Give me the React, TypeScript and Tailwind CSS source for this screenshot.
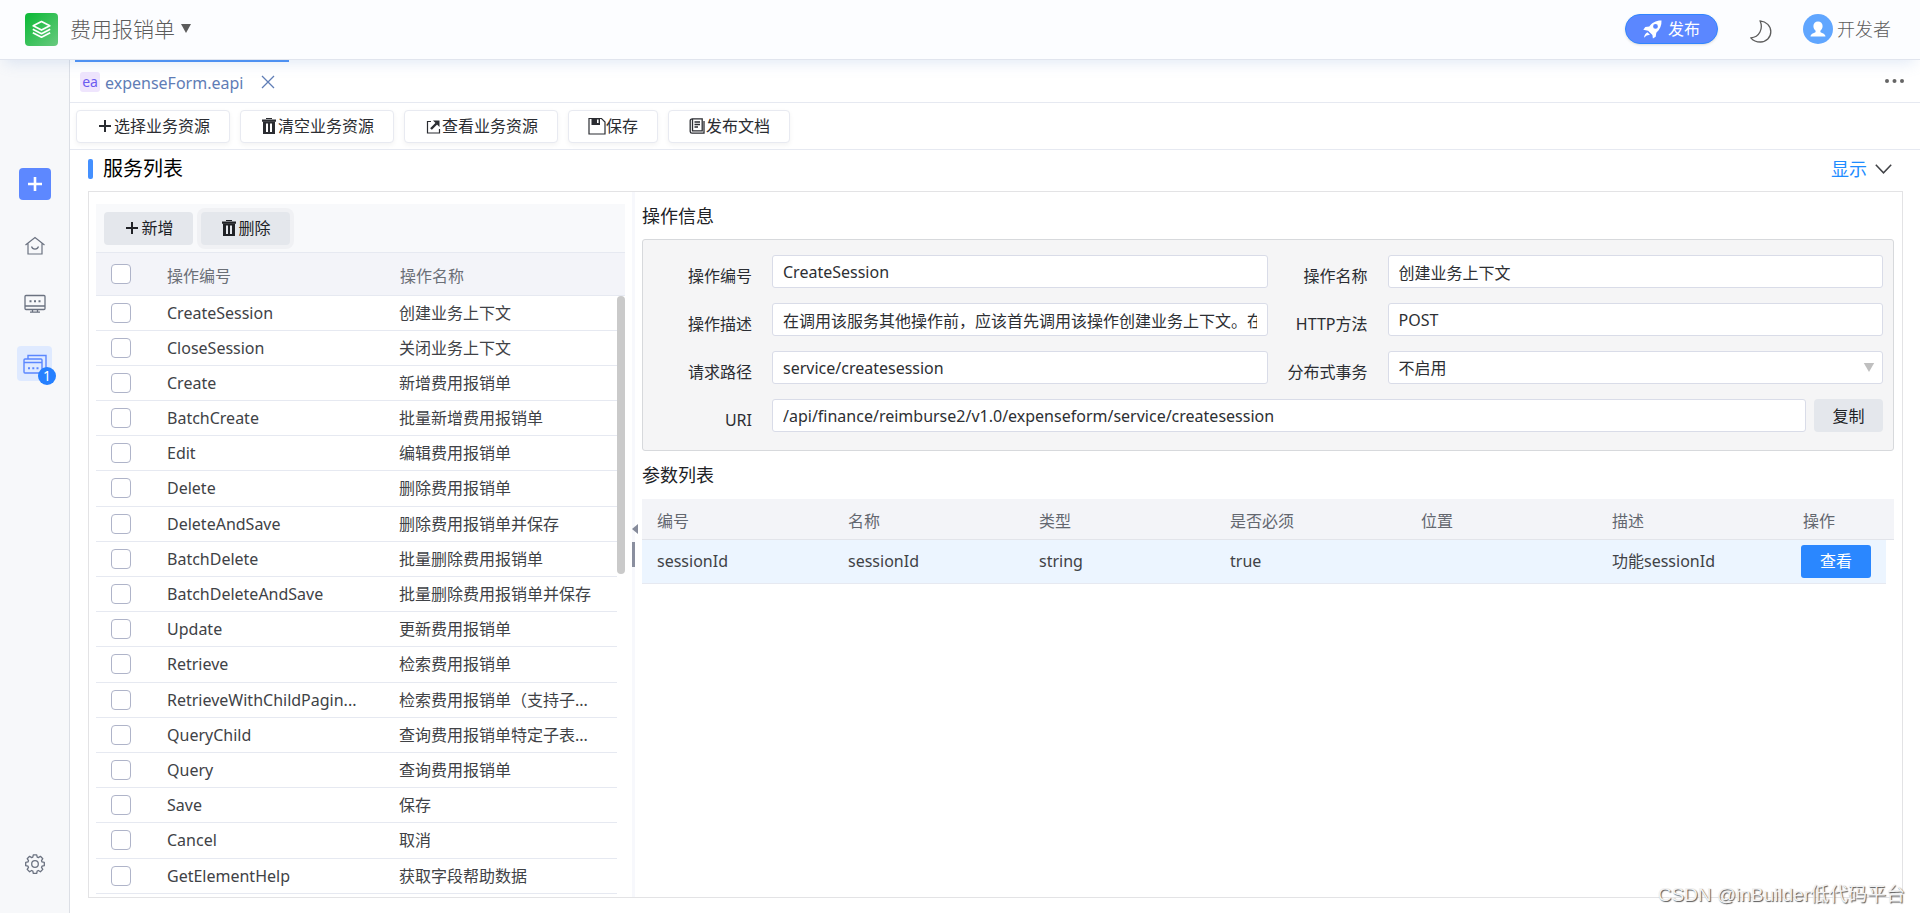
import { Fragment, useState } from 'react';
import type { ReactNode } from 'react';

const operations = [
  { code: 'CreateSession', name: '创建业务上下文' },
  { code: 'CloseSession', name: '关闭业务上下文' },
  { code: 'Create', name: '新增费用报销单' },
  { code: 'BatchCreate', name: '批量新增费用报销单' },
  { code: 'Edit', name: '编辑费用报销单' },
  { code: 'Delete', name: '删除费用报销单' },
  { code: 'DeleteAndSave', name: '删除费用报销单并保存' },
  { code: 'BatchDelete', name: '批量删除费用报销单' },
  { code: 'BatchDeleteAndSave', name: '批量删除费用报销单并保存' },
  { code: 'Update', name: '更新费用报销单' },
  { code: 'Retrieve', name: '检索费用报销单' },
  { code: 'RetrieveWithChildPagin...', name: '检索费用报销单（支持子...' },
  { code: 'QueryChild', name: '查询费用报销单特定子表...' },
  { code: 'Query', name: '查询费用报销单' },
  { code: 'Save', name: '保存' },
  { code: 'Cancel', name: '取消' },
  { code: 'GetElementHelp', name: '获取字段帮助数据' },
];

const paramColumns = ['编号', '名称', '类型', '是否必须', '位置', '描述'];
const params = [['sessionId', 'sessionId', 'string', 'true', '', '功能sessionId']];

const checkboxClass =
  'block size-5 appearance-none rounded border border-[#afb4c9] bg-white checked:border-[#5b89fe] checked:bg-[#5b89fe]';
const inputClass =
  'h-[33px] w-full min-w-0 rounded-[3px] border border-[#d9dce8] bg-white px-2.5 text-base text-[#2d2f33] outline-none';

function PlusIcon() {
  return (
    <svg className="mx-px size-4 shrink-0" viewBox="0 0 16 16" fill="none" stroke="currentColor" strokeWidth="2">
      <path d="M8 2v12M2 8h12" />
    </svg>
  );
}

function TrashIcon() {
  return (
    <svg className="mx-px size-4 shrink-0" viewBox="0 0 16 16" fill="currentColor">
      <path d="M5 0h6v1H5zM1 1.5h14v2.2H1z" />
      <path fillRule="evenodd" d="M2 3.5h12V16H2zM5 5.5v8.5h2V5.5zM9 5.5v8.5h2V5.5z" />
    </svg>
  );
}

function OpenIcon() {
  return (
    <svg className="mx-px size-4 shrink-0" viewBox="0 0 16 16" fill="none" stroke="currentColor" strokeWidth="1.2">
      <path d="M6 3.500H2.500v11.500h12V11" />
      <path d="M6 11l5.500-5.500" strokeWidth="2.400" />
      <path d="M8 2.500h6.500V9z" fill="currentColor" stroke="none" />
    </svg>
  );
}

function SaveIcon() {
  return (
    <svg className="size-[18px] shrink-0" viewBox="0 0 18 18" fill="none" stroke="currentColor" strokeWidth="1.2">
      <path d="M1 1.500h12.500L17 5v12H1z" />
      <path d="M3.500 1.500h8.500V8H3.500z" fill="currentColor" stroke="none" />
      <path d="M9 2.500h1.600v3.600H9z" fill="white" stroke="none" />
    </svg>
  );
}

function DocIcon() {
  return (
    <svg className="mx-px size-4 shrink-0" viewBox="0 0 16 16" fill="none" stroke="currentColor" strokeWidth="1.300">
      <path d="M3.500.8h9.700v12H3.500zM3.500.8c-1.300 0-2.300.8-2.300 2v10.700c0 1 .8 1.700 1.800 1.700h12V3" />
      <path d="M5.500 4h5.500M5.500 6.500h5.500M5.500 9h3.500" />
    </svg>
  );
}

function ToolButton({ icon, children }: { icon: ReactNode; children: ReactNode }) {
  return (
    <button className="flex h-[33px] cursor-pointer items-center rounded border border-[#e8eaf1] bg-white px-[19px] text-base text-[#2b2d32] shadow-[0_2px_5px_rgba(0,0,0,0.05)]">
      {icon}
      {children}
    </button>
  );
}

function Header() {
  return (
    <header className="relative z-10 flex h-[60px] shrink-0 items-center justify-between border-b border-[#e1e5ee] bg-[#fcfdff] pr-[29px] pb-px pl-[25px] text-[#5c5c5c] shadow-[0_8px_14px_-5px_rgba(110,150,210,0.2)]">
      <div className="flex items-center gap-3">
        <svg className="size-[33px]" viewBox="0 0 33 33" fill="none">
          <defs>
            <linearGradient id="logo" x1="0" y1="0" x2="1" y2="1">
              <stop offset="0.1" stopColor="#13bb3c" />
              <stop offset="1" stopColor="#69c97f" />
            </linearGradient>
          </defs>
          <rect width="33" height="33" rx="4" fill="url(#logo)" />
          <g stroke="white" strokeWidth="1.700" strokeLinejoin="round">
            <path d="M16.500 8.500l8.300 4.300-8.300 4.300-8.300-4.300z" />
            <path d="M7.800 16.200l8.700 4.500 8.700-4.500M7.800 19.700l8.700 4.500 8.700-4.500" />
          </g>
        </svg>
        <button className="flex cursor-pointer items-center gap-[5px] text-[21px] leading-7 font-light">
          费用报销单
          <svg className="h-2.5 w-3" viewBox="0 0 12 10" fill="currentColor">
            <path d="M1 0h10L6 9z" />
          </svg>
        </button>
      </div>
      <div className="flex items-center">
        <button className="flex h-[30px] cursor-pointer items-center gap-1.5 rounded-full border border-[#3185ff] bg-[#5b87ff] px-[17px] text-base text-white shadow-sm">
          <svg className="size-[19px]" viewBox="0 0 19 19" fill="currentColor">
            <path
              fillRule="evenodd"
              d="M18.500.5c.3 5-1.600 9.200-5.200 12.200l-.6 4-2.800 1.800-.5-3.600-4.300-4.200L.3 9.700 2.300 7l4-.6C9 2.900 13 .3 18.500.500zM12.500 4a2.400 2.400 0 100 4.800 2.400 2.400 0 000-4.800z"
            />
            <path d="M4.400 12.200l2.600 2.500-3.400.8-2.600 2.200c.3-2.200 1.400-4.400 3.400-5.500z" />
          </svg>
          发布
        </button>
        <button className="ml-8 cursor-pointer" aria-label="深色模式">
          <svg className="mt-1 h-[23px] w-[22px]" viewBox="0 0 22 23" fill="none" stroke="currentColor" strokeWidth="1.300" strokeLinejoin="round">
            <path d="M10 .8C16.400 1.500 20.800 6 20.800 11.800S16.300 22 10.500 22C6.600 22 3 20.500.8 17.800 9.500 17.500 13.500 8.500 10 .8z" />
          </svg>
        </button>
        <button className="ml-[31px] flex cursor-pointer items-center gap-1 text-lg leading-6 font-light">
          <svg className="size-[30px]" viewBox="0 0 30 30">
            <circle cx="15" cy="15" r="15" fill="#60a6ff" />
            <path
              fill="white"
              d="M15 7.500c2.700 0 4.600 1.900 4.600 4.600 0 2-.9 3.700-2.200 4.700v1.300c0 .8 4.800 1.200 5.100 4.400h-15c.3-3.200 5.100-3.600 5.100-4.400v-1.300c-1.300-1-2.200-2.700-2.200-4.700 0-2.700 1.900-4.600 4.600-4.600z"
            />
          </svg>
          开发者
        </button>
      </div>
    </header>
  );
}

function Sidebar() {
  return (
    <aside className="flex w-[70px] shrink-0 flex-col items-center border-r border-[#dcdfe5] bg-[#f7f8fa] pt-[108px] pb-[39px] text-[#6b7280]">
      <button className="flex size-8 cursor-pointer items-center justify-center rounded bg-[#5d88ff] text-white" aria-label="新建">
        <svg className="size-3.5" viewBox="0 0 14 14" stroke="currentColor" strokeWidth="2.600">
          <path d="M7 0v14M0 7h14" />
        </svg>
      </button>
      <button className="mt-[36px] cursor-pointer" aria-label="首页">
        <svg className="size-5" viewBox="0 0 20 20" fill="none" stroke="currentColor" strokeWidth="1.200">
          <path d="M.5 9L10 1.500 19.500 9M3 7.500v10.500h14V7.500M6.500 10.500c1 3.400 6 3.400 7 0" />
        </svg>
      </button>
      <button className="mt-[38px] cursor-pointer" aria-label="页面">
        <svg className="h-5 w-[22px]" viewBox="0 0 22 20" fill="none" stroke="currentColor" strokeWidth="1.300">
          <rect x="1" y="1.500" width="20" height="14" rx="1" />
          <path d="M1 12h20M8.500 15.500v2.500M13.500 15.500v2.500M6 18.200h10" />
          <path d="M5.500 7.200h2M10 7.200h2M14.500 7.200h2" strokeWidth="1.900" />
        </svg>
      </button>
      <button className="relative mt-[32px] flex size-[35px] cursor-pointer items-center justify-center rounded bg-[#dfeaff] text-[#5b87ff]" aria-label="已打开">
        <svg className="h-5 w-6" viewBox="0 0 24 20" fill="none" stroke="currentColor" strokeWidth="1.400">
          <rect x="1" y="5" width="18" height="14" rx="1" />
          <path d="M1 8.500h18M5 5V1.500h18V15h-4" />
          <path d="M5 14.300h2M9.300 14.300h2M13.500 14.300h2" strokeWidth="1.900" />
        </svg>
        <span className="absolute -right-1 -bottom-1 flex size-[18px] items-center justify-center rounded-full bg-[#2680ff] text-sm leading-none text-white">
          1
        </span>
      </button>
      <button className="mt-auto cursor-pointer" aria-label="设置">
        <svg className="size-5" viewBox="0 0 20 20" fill="none" stroke="currentColor" strokeWidth="1.300" strokeLinejoin="round">
          <path d="M8.300.8h3.400l.5 2.300 1.200.5 2-1.300 2.400 2.400-1.300 2 .5 1.200 2.300.5v3.300l-2.300.5-.5 1.200 1.300 2-2.400 2.400-2-1.300-1.200.5-.5 2.300H8.300l-.5-2.300-1.200-.5-2 1.300-2.400-2.400 1.300-2-.5-1.200-2.300-.5V8.400L3 7.900l.5-1.200-1.300-2 2.400-2.400 2 1.300 1.200-.5z" />
          <circle cx="10" cy="10" r="3.300" />
        </svg>
      </button>
    </aside>
  );
}

function OperationList() {
  return (
    <div className="flex w-[529px] shrink-0 flex-col pb-[3px]">
      <div className="flex h-[49px] shrink-0 items-center gap-2 border-b border-[#e6e9f1] bg-[#f8f9fb] px-2 text-[#202226]">
        <button className="flex h-[33px] w-[89px] cursor-pointer items-center justify-center rounded bg-[#e4e7ec] text-base">
          <PlusIcon />
          新增
        </button>
        <button className="flex h-[33px] w-[89px] cursor-pointer items-center justify-center rounded bg-[#e4e7ec] text-base ring-4 ring-[#f0f1f4]">
          <TrashIcon />
          删除
        </button>
      </div>
      <table className="w-full table-fixed text-left">
        <thead>
          <tr className="h-[42px] border-b border-[#e6e9f1] bg-[#f3f4f9] text-[#6b6f77]">
            <th className="w-[71px] pl-[15px]">
              <input type="checkbox" className={checkboxClass} aria-label="全选" />
            </th>
            <th className="w-[233px] pt-1 font-normal">操作编号</th>
            <th className="pt-1 font-normal">操作名称</th>
          </tr>
        </thead>
      </table>
      <div className="flex min-h-0 flex-1">
        <div className="min-w-0 flex-1">
          <table className="h-full w-full table-fixed text-left text-[#404246]">
            <colgroup>
              <col className="w-[71px]" />
              <col className="w-[232px]" />
              <col />
            </colgroup>
            <tbody>
              {operations.map((op) => (
                <tr key={op.code} className="border-b border-[#e6e9f1]">
                  <td className="pl-[15px]">
                    <input type="checkbox" className={checkboxClass} aria-label={op.code} />
                  </td>
                  <td className="truncate pr-5">{op.code}</td>
                  <td className="truncate pr-4">{op.name}</td>
                </tr>
              ))}
            </tbody>
          </table>
        </div>
        <div className="w-2 shrink-0">
          <div className="h-[278px] rounded bg-[#cacaca]" />
        </div>
      </div>
    </div>
  );
}

function Label({ id, children }: { id: string; children: ReactNode }) {
  return (
    <label htmlFor={id} className="h-[33px] pt-[9px] pr-5 text-right text-base text-[#2b2d32]">
      {children}
    </label>
  );
}

function OperationForm() {
  const [values, setValues] = useState({
    code: 'CreateSession',
    name: '创建业务上下文',
    desc: '在调用该服务其他操作前，应该首先调用该操作创建业务上下文。在后续操作中使用该上下文。',
    method: 'POST',
    path: 'service/createsession',
    uri: '/api/finance/reimburse2/v1.0/expenseform/service/createsession',
  });

  const fields: { key: keyof typeof values; label: string }[] = [
    { key: 'code', label: '操作编号' },
    { key: 'name', label: '操作名称' },
    { key: 'desc', label: '操作描述' },
    { key: 'method', label: 'HTTP方法' },
    { key: 'path', label: '请求路径' },
  ];

  const bind = (key: keyof typeof values) => ({
    id: key,
    className: inputClass,
    value: values[key],
    onChange: (e: { target: { value: string } }) => setValues({ ...values, [key]: e.target.value }),
  });

  return (
    <form className="grid grid-cols-[129px_minmax(0,1fr)_120px_minmax(0,1fr)] gap-y-[15px] rounded-[3px] border border-[#d7d9dc] bg-[#f5f5f6] pt-[15px] pr-2.5 pb-[18px]">
      {fields.map((f) => (
        <Fragment key={f.key}>
          <Label id={f.key}>{f.label}</Label>
          <input {...bind(f.key)} />
        </Fragment>
      ))}
      <Label id="transaction">分布式事务</Label>
      <div className="relative">
        <select id="transaction" className={`${inputClass} block appearance-none`} defaultValue="off">
          <option value="off">不启用</option>
          <option value="on">启用</option>
        </select>
        <svg className="pointer-events-none absolute top-3 right-2 h-2.5 w-3" viewBox="0 0 12 10" fill="#bfbfbf">
          <path d="M.8 0h10.400L6 9z" />
        </svg>
      </div>
      <Label id="uri">URI</Label>
      <div className="col-span-3 flex gap-2">
        <input {...bind('uri')} />
        <button type="button" className="w-[69px] shrink-0 cursor-pointer rounded bg-[#e4e7ec] text-base text-[#202226]">
          复制
        </button>
      </div>
    </form>
  );
}

function ParamTable() {
  return (
    <>
      <table className="w-full table-fixed text-left">
        <thead>
          <tr className="h-10 border-b border-[#e2e4ea] bg-[#f3f4f8] text-[#63676f]">
            {paramColumns.map((c) => (
              <th key={c} className="w-[191px] pt-1 pl-[15px] font-normal">{c}</th>
            ))}
            <th className="pt-1 pl-[15px] font-normal">操作</th>
          </tr>
        </thead>
      </table>
      <div className="pr-2">
        <table className="w-full table-fixed text-left text-[#404246]">
          <colgroup>
            {paramColumns.map((c) => (
              <col key={c} className="w-[191px]" />
            ))}
            <col />
          </colgroup>
          <tbody>
            {params.map((row, i) => (
              <tr key={i} className="h-[44px] border-b border-[#e6e9f1] bg-[#ecf5ff]">
                {row.map((cell, j) => (
                  <td key={j} className="pl-[15px]">{cell}</td>
                ))}
                <td className="pl-[13px]">
                  <button className="block h-[33px] w-[70px] cursor-pointer rounded-[3px] bg-[#2a87ff] text-base text-white">
                    查看
                  </button>
                </td>
              </tr>
            ))}
          </tbody>
        </table>
      </div>
    </>
  );
}

export default function App() {
  return (
    <div className="relative flex h-screen flex-col overflow-hidden bg-white font-['Noto_Sans','Noto_Sans_CJK_SC',sans-serif] text-base">
      <Header />
      <div className="flex min-h-0 flex-1">
        <Sidebar />
        <main className="flex min-w-0 flex-1 flex-col">
          {/* File tabs */}
          <div className="flex h-[43px] shrink-0 justify-between border-b border-[#e6e9f1] pr-4 pl-[5px]">
            <div className="flex w-[214px] items-center border-t-2 border-[#4a90f6] px-[5px] text-[#5f7db6]">
              <span className="flex size-5 items-center justify-center rounded-[3px] bg-[#efe5fd] text-sm leading-none text-[#6b5cf0]">ea</span>
              <span className="ml-[5px] pt-0.5 text-base">expenseForm.eapi</span>
              <button className="ml-auto mr-[9px] cursor-pointer" aria-label="关闭">
                <svg className="size-3.5" viewBox="0 0 14 14" stroke="currentColor" strokeWidth="1.300">
                  <path d="M1 1l12 12M13 1L1 13" />
                </svg>
              </button>
            </div>
            <button className="cursor-pointer text-[#666]" aria-label="更多">
              <svg className="h-1 w-[19px]" viewBox="0 0 19 4" fill="currentColor">
                <circle cx="2" cy="2" r="2" />
                <circle cx="9.500" cy="2" r="2" />
                <circle cx="17" cy="2" r="2" />
              </svg>
            </button>
          </div>

          {/* Toolbar */}
          <div className="flex h-[47px] shrink-0 items-center gap-2.5 border-b border-[#e6e9f1] px-1.5">
            <ToolButton icon={<PlusIcon />}>选择业务资源</ToolButton>
            <ToolButton icon={<TrashIcon />}>清空业务资源</ToolButton>
            <ToolButton icon={<OpenIcon />}>查看业务资源</ToolButton>
            <ToolButton icon={<SaveIcon />}>保存</ToolButton>
            <ToolButton icon={<DocIcon />}>发布文档</ToolButton>
          </div>

          {/* Section title */}
          <div className="flex h-[41px] shrink-0 items-center justify-between pr-7 pb-1 pl-[18px]">
            <h2 className="flex items-center gap-2.5 text-xl text-black">
              <span className="h-5 w-[5px] rounded-xs bg-[#4490ff]" />
              服务列表
            </h2>
            <button className="flex cursor-pointer items-center gap-2 text-lg text-[#1e8cff]">
              显示
              <svg className="h-2.5 w-[17px]" viewBox="0 0 17 10" fill="none" stroke="#404246" strokeWidth="1.500">
                <path d="M.8.8l7.700 8 7.700-8" />
              </svg>
            </button>
          </div>

          <div className="mr-[17px] mb-[15px] ml-[18px] flex min-h-0 flex-1 border border-[#e3e3e5]">
            <div className="flex pt-3 pl-[7px]">
              <OperationList />
            </div>

            {/* Splitter */}
            <div className="relative ml-[7px] w-[3px] shrink-0 bg-[#f7f8fc]">
              <svg className="absolute top-[332px] left-0 h-2.5 w-1.5" viewBox="0 0 6 10" fill="#868b9b">
                <path d="M6 0v10L0 5z" />
              </svg>
              <div className="absolute top-[350px] left-0 h-[25px] w-[3px] bg-[#8a8f9f]" />
            </div>

            <section className="min-w-0 flex-1 pr-2 pl-[7px]">
              <h3 className="flex h-[47px] items-center text-lg text-[#202226]">操作信息</h3>
              <OperationForm />
              <h3 className="flex h-12 items-center text-lg text-[#202226]">参数列表</h3>
              <ParamTable />
            </section>
          </div>
        </main>
      </div>
      <div className="pointer-events-none absolute right-[15px] bottom-1 font-['Liberation_Sans','Noto_Sans_CJK_SC',sans-serif] text-[19px] leading-7 text-[#f2f2f2] [text-shadow:1px_1px_1px_#555]">
        CSDN @inBuilder低代码平台
      </div>
    </div>
  );
}
